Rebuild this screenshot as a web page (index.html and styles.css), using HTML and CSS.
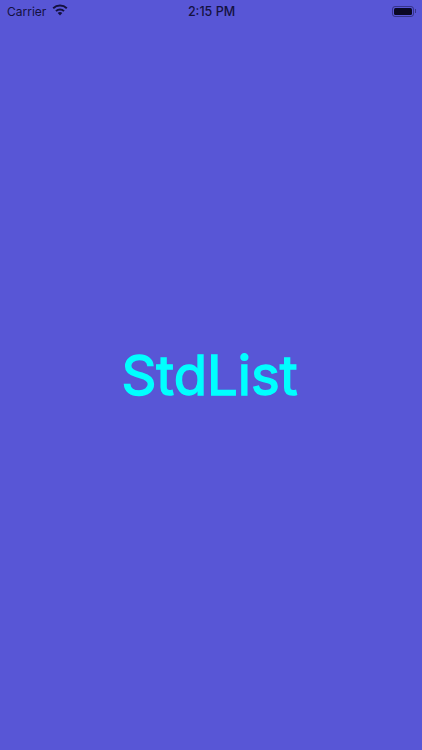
FILE: index.html
```html
<!DOCTYPE html>
<html lang="en">
<head>
    <meta charset="UTF-8">
    <meta name="viewport" content="width=device-width, initial-scale=1.0">
    <title>StdList</title>
    <link rel="stylesheet" href="styles.css">
</head>
<body>
    <div class="statusbar">
        <div class="left">
            <span>Carrier</span>
            <svg class="wifi" width="16" height="12" viewBox="0 0 16 12">
                <path d="M1.200 4.200C3 2.500 5.400 1.500 8 1.500s5 1 6.800 2.700" fill="none" stroke="#14113f" stroke-width="2"/>
                <path d="M4 7.100C5 6.100 6.400 5.500 8 5.500s3 .6 4 1.600" fill="none" stroke="#14113f" stroke-width="2"/>
                <path d="M8 8c-.9 0-1.700.3-2.300.9L8 11.400l2.300-2.500C9.700 8.300 8.900 8 8 8z" fill="#14113f"/>
            </svg>
        </div>
        <div class="time">2:15 PM</div>
        <div class="right">
            <div class="battery"><div class="level"></div></div>
            <div class="cap"></div>
        </div>
    </div>

    <div class="splash">
        <h1>StdList</h1>
    </div>
</body>
</html>
```

FILE: styles.css
```css
*{
    margin: 0;
    padding: 0;
    box-sizing: border-box;
}

body{
    display: flex;
    flex-direction: column;
    height: 100vh;
    overflow: hidden;
    background-color: rgb(88, 86, 214);
    font-family: Inter, "Liberation Sans", sans-serif;
}

.statusbar{
    display: grid;
    grid-template-columns: 1fr auto 1fr;
    align-items: center;
    height: 22px;
    padding: 0 6px 0 7px;
    font-size: 12px;
    color: #14113f;
}

.left{
    display: flex;
    align-items: center;
    gap: 6px;
}

.wifi{
    margin-top: -3px;
}

.time{
    font-size: 12.500px;
    font-weight: 500;
}

.right{
    display: flex;
    align-items: center;
    justify-content: flex-end;
}

.battery{
    width: 22px;
    height: 11px;
    padding: 1px;
    border: 1px solid rgba(20, 17, 63, 0.5);
    border-radius: 3px;
}

.level{
    height: 100%;
    border-radius: 1.500px;
    background-color: #0a0825;
}

.cap{
    width: 1px;
    height: 4px;
    margin-left: 1px;
    background-color: rgba(20, 17, 63, 0.5);
}

.splash{
    flex-grow: 1;
    display: flex;
    justify-content: center;
    align-items: center;
    padding: 0 3px 22px 0;
}

.splash h1{
    font-size: 54.500px;
    font-weight: 400;
    -webkit-text-stroke: 1.500px rgb(0, 255, 255);
    line-height: 1;
    color: rgb(0, 255, 255);
}
```
